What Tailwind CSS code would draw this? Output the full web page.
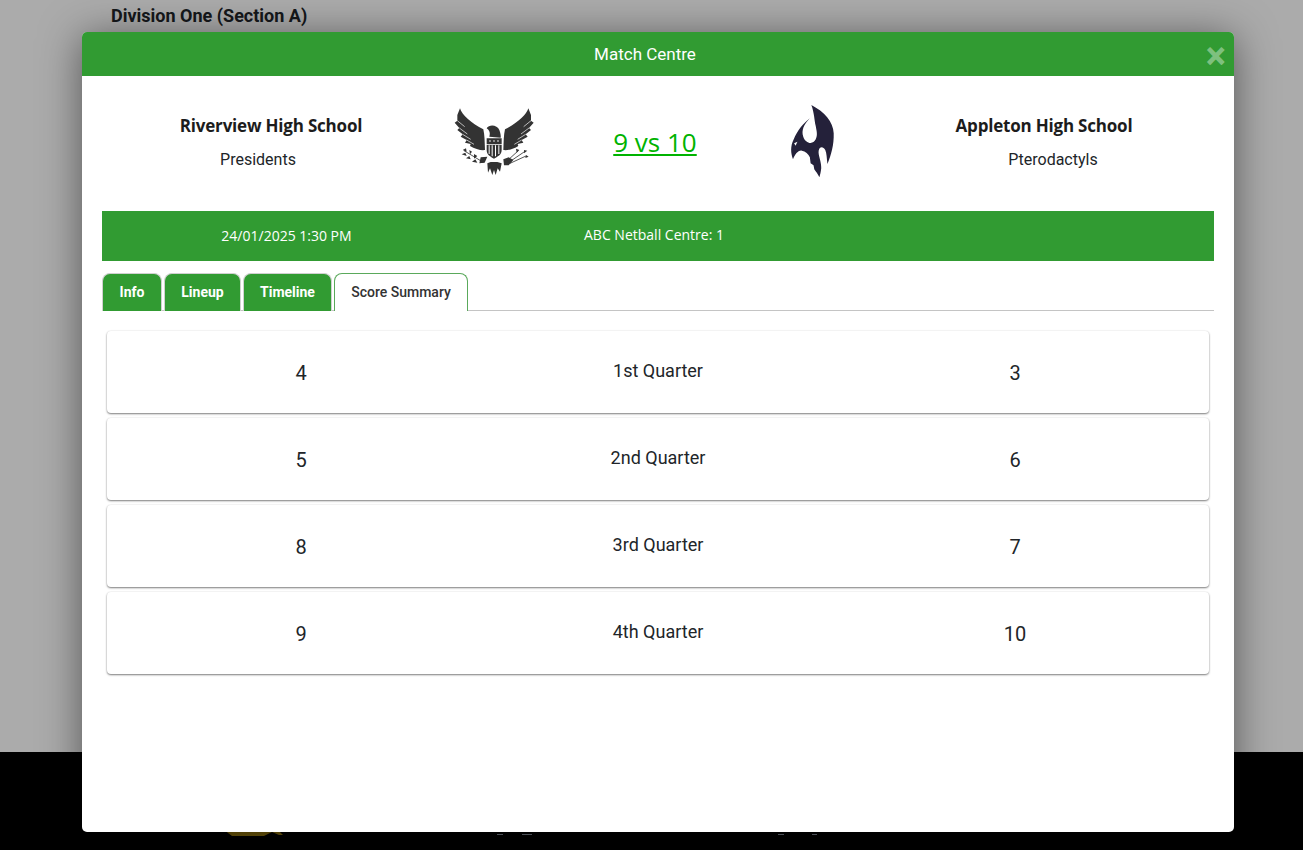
<!DOCTYPE html>
<html lang="en">
<head>
  <meta charset="UTF-8" />
  <title>Match Centre</title>
  <script src="https://cdn.jsdelivr.net/npm/@tailwindcss/browser@4"></script>
</head>
<body class="font-['Roboto',sans-serif] text-[#212529]">
<div class="relative h-[850px] overflow-hidden bg-white flex flex-col">

  <!-- Page behind the modal -->
  <h2 class="pl-[111px] pt-[5px] text-[18px] leading-[22px] font-bold text-[#212529]">Division One (Section A)</h2>
  <div class="flex-1"></div>
  <footer class="h-[98px] bg-black relative">
    <svg class="absolute left-[222px] top-[78px]" width="66" height="8" viewBox="0 0 66 8">
      <path fill="#a8860f" d="M3 0H20L24 1H44L50 0H56L61 5H57L50 2L42 6H10L6 3Z" />
    </svg>
    <div class="absolute left-[497px] top-[82px] w-[6px] h-[1px] bg-gray-400"></div>
    <div class="absolute left-[522px] top-[82px] w-[10px] h-[1px] bg-gray-400"></div>
    <div class="absolute left-[778px] top-[82px] w-[6px] h-[1px] bg-gray-400"></div>
    <div class="absolute left-[812px] top-[82px] w-[5px] h-[1px] bg-gray-400"></div>
  </footer>

  <!-- Overlay -->
  <div class="absolute inset-0 bg-black/33"></div>

  <!-- Modal -->
  <div class="absolute left-[82px] top-[32px] w-[1152px] h-[800px] bg-white rounded-[5px] overflow-hidden shadow-[0_5px_40px_rgba(0,0,0,0.5)]">
    <div class="relative h-[44px] bg-[#319b32] flex items-center justify-center pr-[26px]">
      <span class="text-white text-[17px] font-normal pt-[1px]">Match Centre</span>
      <span class="absolute right-[8px] top-[1px] text-[38px] leading-[46px] font-bold text-white/40">×</span>
    </div>

    <div class="px-[20px]">
      <!-- Teams -->
      <div class="h-[135px] flex items-center font-['Open_Sans',sans-serif]">
        <div class="w-[338px] text-center mt-[-3px]">
          <div class="text-[17px] leading-[24px] font-bold text-[#1c1c1c] tracking-[-0.2px]">Riverview High School</div>
          <div class="mt-[12px] pr-[26px] font-['Roboto',sans-serif] text-[16px] leading-[20px]">Presidents</div>
        </div>
        <div class="w-[108px] pl-[2px] flex justify-center">
          <svg width="90" height="80" viewBox="0 0 270 240" class="mt-[-7px]">
            <g fill="#333333">
              <path d="M30 25C35 45 65 70 100 88C104 105 104 125 105 150C95 152 75 148 60 138L62 132L45 128L50 120L32 110L38 103L22 90L28 84L14 68L22 62L22 45Z" />
              <path transform="matrix(-1 0 0 1 265 0)" d="M30 25C35 45 65 70 100 88C104 105 104 125 105 150C95 152 75 148 60 138L62 132L45 128L50 120L32 110L38 103L22 90L28 84L14 68L22 62L22 45Z" />
              <path d="M110 85C118 72 142 75 148 90C152 100 153 110 152 113L118 110C122 100 118 90 110 85Z" />
              <path d="M110 115H155V132H110Z" />
              <path d="M110 134H155V150C155 165 142 170 132 176C122 170 110 165 110 150Z" />
              <path d="M112 190L122 186H142L155 190L150 215L143 205L137 225L132 210L127 225L120 205L114 218Z" />
              <!-- laurel -->
              <path d="M38 150L48 145L50 155Z M35 163L46 158L50 168Z M58 150L66 155L60 163Z M48 175L58 168L62 178Z M72 162L82 168L72 176Z M66 185L76 178L82 188Z M92 172L112 170L104 188L88 190Z" />
              <path d="M42 152L100 187" stroke="#333333" stroke-width="2.5" fill="none" />
              <!-- arrows -->
              <path d="M160 178L176 172L190 180L176 196L162 196Z" />
              <path d="M175 188L222 156M180 190L228 168M172 182L205 152" stroke="#333333" stroke-width="2.5" fill="none" />
              <path d="M222 150L232 152L222 160Z M198 146L208 150L200 158Z M228 165L236 170L226 174Z" />
            </g>
            <g stroke="#ffffff" stroke-width="2" fill="none">
              <path d="M38 103L62 118M28 84L52 102M50 120L72 133M22 62L44 80" />
              <path d="M227 103L203 118M237 84L213 102M215 120L193 133M243 62L221 80" />
            </g>
            <g fill="#fff">
              <circle cx="120" cy="123" r="2.5" /><circle cx="132" cy="123" r="2.5" /><circle cx="144" cy="123" r="2.5" />
              <path d="M116 136h3v26h-3zM125 136h3v33h-3zM135 136h3v33h-3zM145 136h3v26h-3z" />
            </g>
          </svg>
        </div>
        <div class="w-[214px] text-center text-[26px] leading-[34px] text-[#00b300] underline mt-[-3px]">9 vs 10</div>
        <div class="w-[104px] pl-[2px] flex justify-center">
          <svg width="66" height="85" viewBox="0 0 180 255" preserveAspectRatio="none" class="mt-[-2px]">
            <path fill="#24213a" d="M80 15C115 35 140 65 141 100C142 135 134 165 124 192C122 175 122 160 118 150C112 138 102 140 100 152C98 165 108 185 107 205C106 215 104 225 102 232C98 222 92 214 88 208L86 196L78 190L76 172C72 162 64 154 54 152C44 150 34 165 30 178C24 160 22 140 32 118C42 92 58 70 76 55C60 72 52 92 58 110C64 130 84 136 92 118C98 104 94 92 92 78C88 60 88 38 80 15Z" />
            <path fill="#fff" d="M33 130L42 125L37 137Z" />
          </svg>
        </div>
        <div class="w-[348px] pl-[8px] text-center mt-[-3px]">
          <div class="text-[17px] leading-[24px] font-bold text-[#1c1c1c] tracking-[-0.2px]">Appleton High School</div>
          <div class="mt-[12px] pl-[18px] font-['Roboto',sans-serif] text-[16px] leading-[20px]">Pterodactyls</div>
        </div>
      </div>

      <!-- Date and venue -->
      <div class="h-[50px] bg-[#319b32] text-white flex font-['Open_Sans',sans-serif] text-[14px]">
        <div class="w-[369px] pt-[14px] text-center">24/01/2025 1:30 PM</div>
        <div class="w-[366px] pt-[13px] text-center">ABC Netball Centre: 1</div>
      </div>

      <!-- Tabs -->
      <div class="mt-[12px] h-[38px] flex gap-[2px] border-b border-[#c4c4c4] text-[14px]">
        <div class="w-[60px] h-[38px] bg-[#319b32] border border-b-0 border-[#d0d0d0] rounded-t-[8px] text-white font-bold flex items-center justify-center">Info</div>
        <div class="w-[77px] h-[38px] bg-[#319b32] border border-b-0 border-[#d0d0d0] rounded-t-[8px] text-white font-bold flex items-center justify-center">Lineup</div>
        <div class="w-[89px] h-[38px] bg-[#319b32] border border-b-0 border-[#d0d0d0] rounded-t-[8px] text-white font-bold flex items-center justify-center">Timeline</div>
        <div class="w-[134px] h-[38px] bg-white border border-b-0 border-[#5aa95b] rounded-t-[8px] text-[#333] font-medium flex items-center justify-center">Score Summary</div>
      </div>

      <!-- Quarter scores -->
      <div class="mt-[20px] mx-[5px] flex flex-col gap-[5px]">
        <div class="h-[82px] rounded-[4px] bg-white shadow-[0_1px_2px_rgba(0,0,0,0.5),0_0_2px_rgba(0,0,0,0.08)] grid grid-cols-[388px_326px_388px] items-center text-center">
          <div class="text-[20px] pt-[1px]">4</div><div class="text-[18px] mt-[-4px]">1st Quarter</div><div class="text-[20px] pt-[1px]">3</div>
        </div>
        <div class="h-[82px] rounded-[4px] bg-white shadow-[0_1px_2px_rgba(0,0,0,0.5),0_0_2px_rgba(0,0,0,0.08)] grid grid-cols-[388px_326px_388px] items-center text-center">
          <div class="text-[20px] pt-[1px]">5</div><div class="text-[18px] mt-[-4px]">2nd Quarter</div><div class="text-[20px] pt-[1px]">6</div>
        </div>
        <div class="h-[82px] rounded-[4px] bg-white shadow-[0_1px_2px_rgba(0,0,0,0.5),0_0_2px_rgba(0,0,0,0.08)] grid grid-cols-[388px_326px_388px] items-center text-center">
          <div class="text-[20px] pt-[1px]">8</div><div class="text-[18px] mt-[-4px]">3rd Quarter</div><div class="text-[20px] pt-[1px]">7</div>
        </div>
        <div class="h-[82px] rounded-[4px] bg-white shadow-[0_1px_2px_rgba(0,0,0,0.5),0_0_2px_rgba(0,0,0,0.08)] grid grid-cols-[388px_326px_388px] items-center text-center">
          <div class="text-[20px] pt-[1px]">9</div><div class="text-[18px] mt-[-4px]">4th Quarter</div><div class="text-[20px] pt-[1px]">10</div>
        </div>
      </div>
    </div>
  </div>
</div>
</body>
</html>
